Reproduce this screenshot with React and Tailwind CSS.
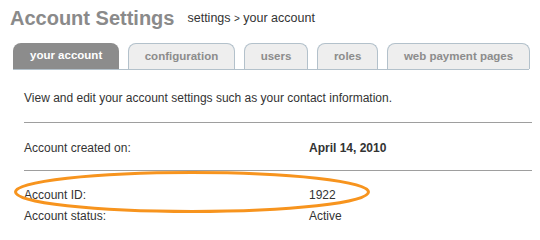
import React from "react";

const tabs = [
  { label: "your account", active: true },
  { label: "configuration" },
  { label: "users" },
  { label: "roles" },
  { label: "web payment pages" },
];

export default function App() {
  return (
    <div
      className="relative w-[540px] h-[232px] overflow-hidden bg-white text-[#333333]"
      style={{ fontFamily: '"Liberation Sans", Arial, sans-serif' }}
    >
      <div className="flex items-center pl-[10px] pt-[8px] h-[28px]">
        <h1 className="text-[20px] leading-[20px] font-bold text-[#8a8a8a] whitespace-nowrap">Account Settings</h1>
        <span className="ml-[13px] text-[12.5px] leading-[16px] text-[#333333] whitespace-nowrap">
          settings <span className="text-[10px]">&gt;</span> your account
        </span>
      </div>

      <div className="ml-[13px] mt-[15px] w-[516px] flex items-end gap-[8.5px] border-b border-[#b3c1cb]">
        {tabs.map((t) =>
          t.active ? (
            <div
              key={t.label}
              className="shrink-0 whitespace-nowrap h-[26px] px-[17px] flex items-center rounded-t-[8px] bg-[#8c8c8c] text-white text-[11.5px] font-bold"
            >
              {t.label}
            </div>
          ) : (
            <div
              key={t.label}
              className="shrink-0 whitespace-nowrap h-[26px] px-[16px] flex items-center rounded-t-[8px] border border-b-0 border-[#b3c1cb] bg-[#eeeeee] text-[#8c8c8c] text-[11.5px] font-bold"
            >
              {t.label}
            </div>
          )
        )}
      </div>

      <div className="pl-[24px] pr-[8px] text-[12px] leading-[16px]">
        <p className="mt-[20px] whitespace-nowrap">View and edit your account settings such as your contact information.</p>
        <div className="mt-[16px] h-px bg-[#9e9e9e]" />
        <div className="mt-[17px] flex">
          <span className="w-[285px]">Account created on:</span>
          <span className="font-bold">April 14, 2010</span>
        </div>
        <div className="mt-[14px] h-px bg-[#9e9e9e]" />
        <div className="mt-[16px] flex">
          <span className="w-[285px]">Account ID:</span>
          <span>1922</span>
        </div>
        <div className="mt-[5px] flex">
          <span className="w-[285px]">Account status:</span>
          <span>Active</span>
        </div>
      </div>

      <svg className="absolute left-0 top-0 pointer-events-none" width="540" height="232">
        <ellipse cx="192" cy="192" rx="176.5" ry="19.5" fill="none" stroke="#f7941e" strokeWidth="3" />
      </svg>
    </div>
  );
}
